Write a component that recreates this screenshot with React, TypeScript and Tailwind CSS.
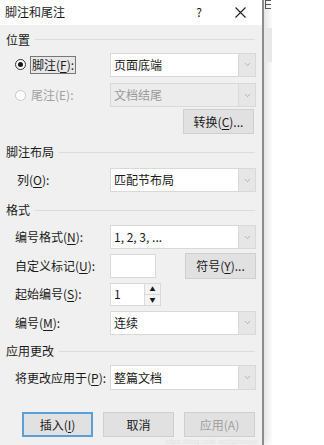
import { ChevronDown } from 'lucide-react';

const FONT = { fontFamily: '"Noto Sans CJK SC", "Microsoft YaHei", sans-serif' };

function Key({ k }: { k: string }) {
  return <span className="underline underline-offset-2">{k}</span>;
}

function Header({ text }: { text: string }) {
  return (
    <div className="flex h-[18px] items-center pl-[6px] pr-[7px]">
      <span className="text-[12px] text-[#1a1a1a]">{text}</span>
      <div className="ml-[5px] h-px flex-1 bg-[#dcdcdc]" />
    </div>
  );
}

function Combo({ value, disabled }: { value: string; disabled?: boolean }) {
  return (
    <div
      className={`flex h-full w-[146px] items-stretch border ${
        disabled ? 'border-[#d9d9d9] bg-[#ececec] text-[#9a9a9a]' : 'border-[#d9d9d9] bg-white text-[#1a1a1a]'
      }`}
    >
      <div className="flex flex-1 items-center pl-[3px] text-[12px]">{value}</div>
      <div className="flex w-[17px] items-center justify-center border-l border-[#d9d9d9] bg-[#e6e6e6]">
        <ChevronDown size={9} strokeWidth={1.5} className="text-[#8a8a8a]" />
      </div>
    </div>
  );
}

function Btn({ children, primary, disabled }: { children: React.ReactNode; primary?: boolean; disabled?: boolean }) {
  return (
    <div
      className={`flex h-full w-[71px] items-center justify-center bg-[#e1e1e1] text-[12px] ${
        primary ? 'border-2 border-[#5a9fd6]' : 'border border-[#cfcfcf]'
      } ${disabled ? 'text-[#a0a0a0]' : 'text-[#1a1a1a]'}`}
    >
      {children}
    </div>
  );
}

function Row({ label, h, mt, children }: { label: React.ReactNode; h: number; mt: number; children: React.ReactNode }) {
  return (
    <div className="flex items-stretch pl-[15px]" style={{ height: h, marginTop: mt }}>
      <div className="flex w-[95px] items-center text-[12px] text-[#1a1a1a]">{label}</div>
      {children}
    </div>
  );
}

export default function App() {
  return (
    <div className="flex h-[445px] w-[324px] overflow-hidden bg-white" style={FONT}>
      {/* Dialog */}
      <div className="flex w-[264px] shrink-0 flex-col border-r-2 border-[#8c8c8c] bg-[#f0f0f0] shadow-[4px_0_8px_rgba(0,0,0,0.12)]">
        <div className="flex h-[25px] items-center bg-white pl-[5px] text-[12px] text-[#1a1a1a]">
          <span className="flex-1">脚注和尾注</span>
          <span className="mr-[33px] text-[12px]">?</span>
          <svg width="11" height="11" viewBox="0 0 11 11" className="mr-[16px]">
            <path d="M0.5 0.5 L10.5 10.5 M10.5 0.5 L0.5 10.5" stroke="#222" strokeWidth="1.1" />
          </svg>
        </div>

        <div className="mt-[6px]">
          <Header text="位置" />
        </div>

        {/* Footnote radio */}
        <div className="mt-[4px] flex h-[24px] items-stretch pl-[15px]">
          <div className="flex w-[95px] items-center">
            <div className="flex h-[11px] w-[11px] items-center justify-center rounded-full border border-[#333] bg-white">
              <div className="h-[5px] w-[5px] rounded-full bg-[#1a1a1a]" />
            </div>
            <div className="ml-[4px] flex h-[18px] items-center border border-[#777] bg-[#e8e8e8] px-[1px] text-[12px] text-[#1a1a1a]">
              脚注(<Key k="F" />):
            </div>
          </div>
          <Combo value="页面底端" />
        </div>

        {/* Endnote radio */}
        <div className="mt-[6px] flex h-[25px] items-stretch pl-[15px]">
          <div className="flex w-[95px] items-center">
            <div className="h-[11px] w-[11px] rounded-full border border-[#c8c8c8] bg-white" />
            <div className="ml-[5px] text-[12px] text-[#a0a0a0]">尾注(E):</div>
          </div>
          <Combo value="文档结尾" disabled />
        </div>

        <div className="mt-[2px] flex h-[25px] justify-end pr-[8px]">
          <Btn>
            转换(<Key k="C" />)...
          </Btn>
        </div>

        <div className="mt-[9px]">
          <Header text="脚注布局" />
        </div>

        <Row label={<span className="pl-[2px]">列(<Key k="O" />):</span>} h={24} mt={7}>
          <Combo value="匹配节布局" />
        </Row>

        <div className="mt-[9px]">
          <Header text="格式" />
        </div>

        <Row label={<span>编号格式(<Key k="N" />):</span>} h={24} mt={6}>
          <Combo value="1, 2, 3, ..." />
        </Row>

        <div className="mt-[4px] flex h-[26px] items-stretch pl-[15px]">
          <div className="flex w-[95px] items-center text-[12px] text-[#1a1a1a]">
            自定义标记(<Key k="U" />):
          </div>
          <div className="my-[1px] w-[46px] border border-[#d9d9d9] bg-white" />
          <div className="ml-[29px]">
            <Btn>
              符号(<Key k="Y" />)...
            </Btn>
          </div>
        </div>

        <Row label={<span>起始编号(<Key k="S" />):</span>} h={23} mt={4}>
          <div className="flex w-[51px] border border-[#d9d9d9] bg-white">
            <div className="flex flex-1 items-center pl-[3px] text-[12px] text-[#1a1a1a]">1</div>
            <div className="flex w-[16px] flex-col border-l border-[#d9d9d9] bg-[#f3f3f3]">
              <div className="flex flex-1 items-center justify-center border-b border-[#d9d9d9] text-[6px] leading-none text-[#1a1a1a]">▲</div>
              <div className="flex flex-1 items-center justify-center text-[6px] leading-none text-[#1a1a1a]">▼</div>
            </div>
          </div>
        </Row>

        <Row label={<span>编号(<Key k="M" />):</span>} h={25} mt={5}>
          <Combo value="连续" />
        </Row>

        <div className="mt-[7px]">
          <Header text="应用更改" />
        </div>

        <Row label={<span>将更改应用于(<Key k="P" />):</span>} h={25} mt={5}>
          <Combo value="整篇文档" />
        </Row>

        <div className="mt-[22px] flex h-[25px] gap-[10px] pl-[22px]">
          <Btn primary>
            插入(<Key k="I" />)
          </Btn>
          <Btn>取消</Btn>
          <Btn disabled>应用(A)</Btn>
        </div>
        <div className="mt-[1px] pl-[165px] text-[7px] leading-none text-[#e2e2e2]" style={{ fontFamily: '"Liberation Sans", sans-serif' }}>
          https://blog.csdn.net/bzhxuexi
        </div>
      </div>

      {/* Background window strip */}
      <div className="flex w-[8px] flex-col">
        <svg width="6" height="9" viewBox="0 0 6 9" className="ml-[1px]">
          <path d="M0.5 0 V9 M0.5 0.5 H6 M0.5 4.5 H6 M0.5 8.5 H6" stroke="#555" strokeWidth="1" fill="none" />
        </svg>
        <div className="mt-[19px] h-[34px] bg-[#e8e8e8]" />
      </div>
      <div className="flex-1 bg-white" />
    </div>
  );
}
